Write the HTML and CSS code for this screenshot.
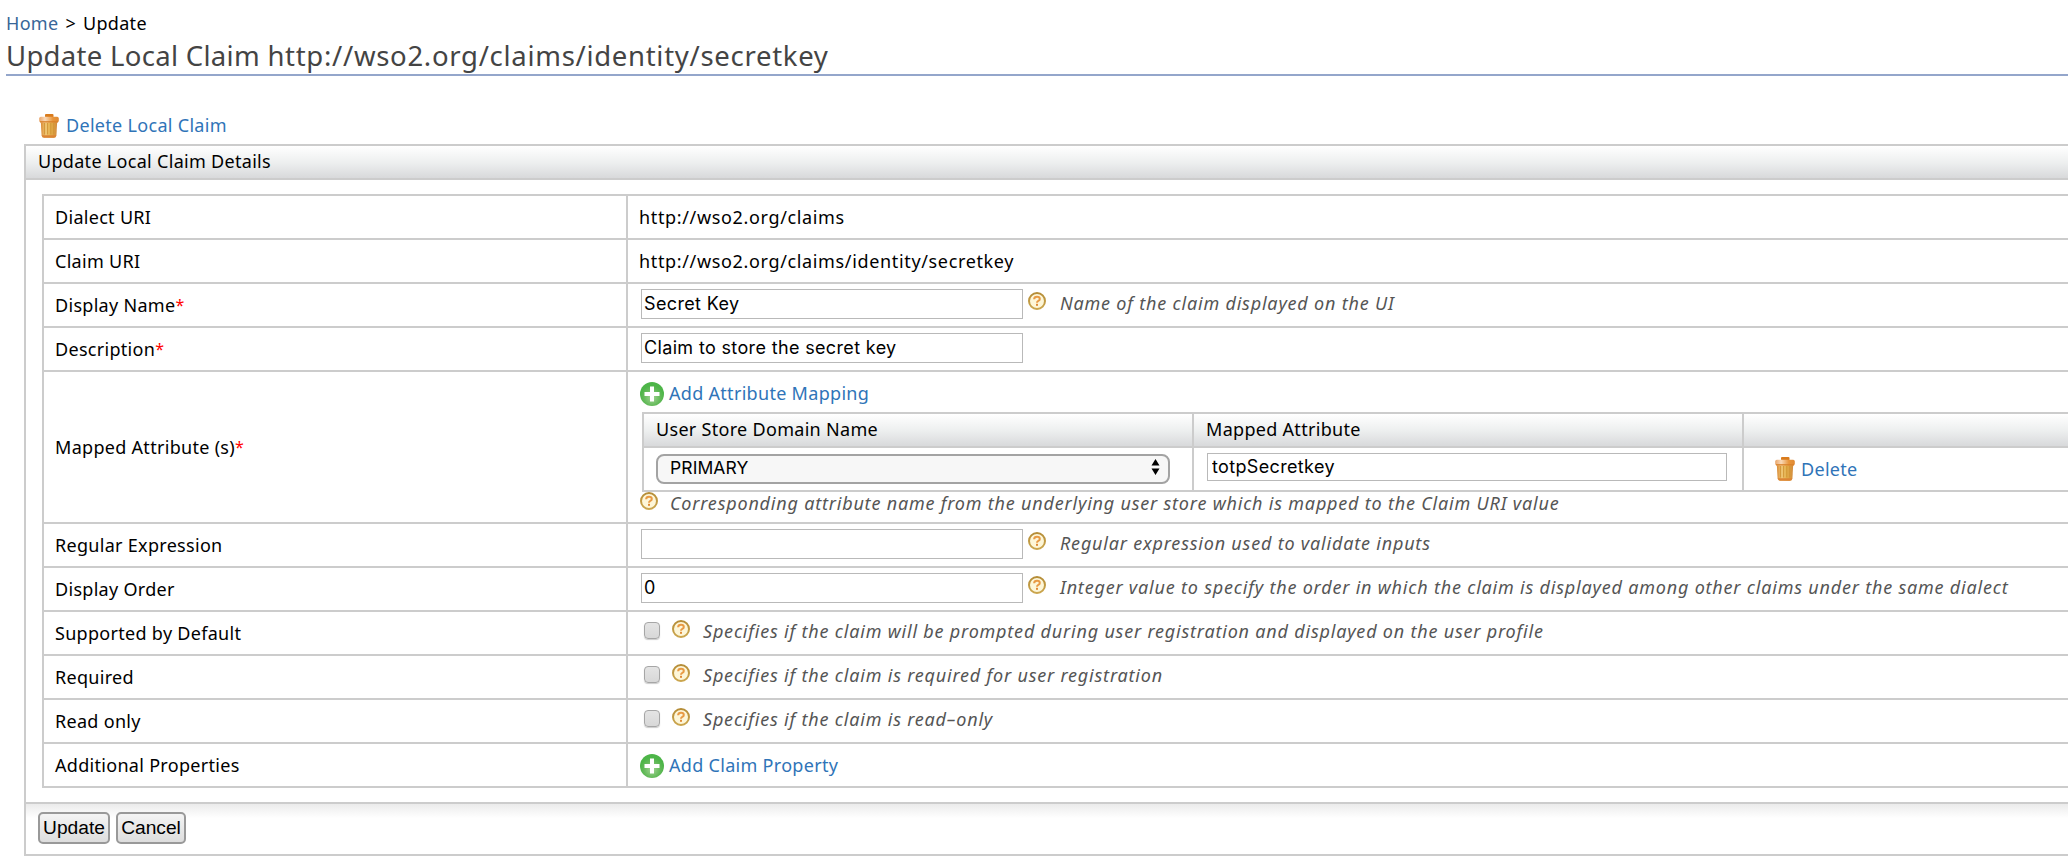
FILE: index.html
```html
<!DOCTYPE html>
<html lang="en">
<head>
<meta charset="utf-8">
<title>Update Local Claim</title>
<link rel="stylesheet" href="styles.css">
</head>
<body>
<svg class="defs" width="0" height="0">
  <defs>
    <linearGradient id="can" x1="0" x2="1" y1="0" y2="0">
      <stop offset="0" stop-color="#d98a35"/><stop offset=".3" stop-color="#f0c878"/><stop offset=".6" stop-color="#e4b04a"/><stop offset="1" stop-color="#d28a3c"/>
    </linearGradient>
    <linearGradient id="lid" x1="0" x2="1" y1="0" y2="0">
      <stop offset="0" stop-color="#e9a56a"/><stop offset=".3" stop-color="#f9d9b8"/><stop offset=".7" stop-color="#e8953a"/><stop offset="1" stop-color="#e08a34"/>
    </linearGradient>
    <radialGradient id="leaf" cx=".5" cy=".65" r=".5">
      <stop offset="0" stop-color="#a2d494"/><stop offset=".7" stop-color="#62b958"/><stop offset="1" stop-color="#4db548"/>
    </radialGradient>
    <linearGradient id="ring" x1="0" x2="0" y1="0" y2="1">
      <stop offset="0" stop-color="#b58d38"/><stop offset="1" stop-color="#cba64e"/>
    </linearGradient>
  </defs>
  <symbol id="trash" viewBox="0 0 20 24">
    <rect x="6" y="0" width="8.5" height="3.6" rx="1" fill="#d97b1c"/>
    <path d="M1.8 8h16.4l-.8 13.6q-.3 2.2-2.6 2.2H5.2q-2.3 0-2.6-2.2z" fill="url(#can)"/>
    <path d="M5.6 9v11.5M8.6 9v11.5M11.8 9v11.5M14.8 9v11.5" stroke="#cf9232" stroke-width=".9" fill="none"/>
    <path d="M2.8 21.2h14.4q-.4 2.6-2.6 2.6H5.4q-2.2 0-2.6-2.6z" fill="#dc8434"/>
    <rect x=".2" y="2.8" width="19.6" height="5.6" rx="1.6" fill="url(#lid)"/>
    <path d="M1 7.8h18" stroke="#d9822b" stroke-width="1.3"/>
  </symbol>
  <symbol id="plus" viewBox="0 0 24 24">
    <circle cx="12" cy="12" r="12" fill="url(#leaf)"/>
    <path d="M12 4.5v15M4.5 12h15" stroke="#fff" stroke-width="4"/>
  </symbol>
  <symbol id="help" viewBox="0 0 18 18">
    <circle cx="9" cy="9" r="8" fill="#fdf6d8" stroke="url(#ring)" stroke-width="2"/>
    <path d="M6.1 7.2Q6.2 4.7 9 4.7q2.8 0 2.8 2.2 0 1.3-1.5 2Q9 9.5 9 10.8" fill="none" stroke="#e89a45" stroke-width="2"/>
    <rect x="8" y="11.8" width="2" height="2" fill="#e08a35"/>
  </symbol>
</svg>

<div class="crumbs"><a class="home">Home</a> <span class="sep">&gt;</span> <span>Update</span></div>
<h1 class="title">Update Local Claim <span class="uri">http://wso2.org/claims/identity/secretkey</span></h1>

<main class="work">
  <a class="action remove"><svg class="trash"><use href="#trash"/></svg><span>Delete Local Claim</span></a>
  <section class="panel">
    <h2 class="bar">Update Local Claim Details</h2>
    <div class="form">
      <div class="row"><div class="label">Dialect URI</div><div class="value plain">http://wso2.org/claims</div></div>
      <div class="row"><div class="label">Claim URI</div><div class="value plain">http://wso2.org/claims/identity/secretkey</div></div>
      <div class="row"><div class="label">Display Name<span class="req">*</span></div><div class="value"><input class="field" type="text" value="Secret Key"><svg class="help"><use href="#help"/></svg><i class="hint">Name of the claim displayed on the UI</i></div></div>
      <div class="row"><div class="label">Description<span class="req">*</span></div><div class="value"><input class="field" type="text" value="Claim to store the secret key"></div></div>
      <div class="row tall"><div class="label">Mapped Attribute (s)<span class="req">*</span></div>
        <div class="value stack">
          <a class="action add"><svg class="plus"><use href="#plus"/></svg><span>Add Attribute Mapping</span></a>
          <div class="map">
            <div class="th">User Store Domain Name</div><div class="th">Mapped Attribute</div><div class="th"></div>
            <div class="td"><div class="select"><span>PRIMARY</span><svg class="arrows" viewBox="0 0 9 16"><path d="M4.5 0L8.5 6.4H.5zM4.5 16L.5 9.6h8z"/></svg></div></div>
            <div class="td"><input class="field wide" type="text" value="totpSecretkey"></div>
            <div class="td"><a class="action del"><svg class="trash"><use href="#trash"/></svg><span>Delete</span></a></div>
          </div>
          <div class="note"><svg class="help"><use href="#help"/></svg><i class="hint">Corresponding attribute name from the underlying user store which is mapped to the Claim URI value</i></div>
        </div>
      </div>
      <div class="row"><div class="label">Regular Expression</div><div class="value"><input class="field" type="text"><svg class="help"><use href="#help"/></svg><i class="hint">Regular expression used to validate inputs</i></div></div>
      <div class="row"><div class="label">Display Order</div><div class="value"><input class="field" type="text" value="0"><svg class="help"><use href="#help"/></svg><i class="hint">Integer value to specify the order in which the claim is displayed among other claims under the same dialect</i></div></div>
      <div class="row"><div class="label">Supported by Default</div><div class="value"><input class="check" type="checkbox"><svg class="help"><use href="#help"/></svg><i class="hint">Specifies if the claim will be prompted during user registration and displayed on the user profile</i></div></div>
      <div class="row"><div class="label">Required</div><div class="value"><input class="check" type="checkbox"><svg class="help"><use href="#help"/></svg><i class="hint">Specifies if the claim is required for user registration</i></div></div>
      <div class="row"><div class="label">Read only</div><div class="value"><input class="check" type="checkbox"><svg class="help"><use href="#help"/></svg><i class="hint">Specifies if the claim is read–only</i></div></div>
      <div class="row"><div class="label">Additional Properties</div><div class="value stack"><a class="action add"><svg class="plus"><use href="#plus"/></svg><span>Add Claim Property</span></a></div></div>
    </div>
    <div class="foot"><button class="btn update">Update</button><button class="btn cancel">Cancel</button></div>
  </section>
</main>
</body>
</html>
```
FILE: styles.css
```css
* { box-sizing: border-box; }
body { margin: 0; height: 864px; overflow: hidden; background: #fff; color: #000; font: 18px "Noto Sans", sans-serif; letter-spacing: .3px; white-space: nowrap; }
.defs { display: block; height: 0; }
svg { display: block; flex: none; }
h1, h2 { margin: 0; font-weight: 400; }

.crumbs { height: 38px; padding-left: 6px; line-height: 46px; }
.home { color: #386698; }
.sep { margin: 0 2px; }
.title { height: 38px; margin-left: 6px; border-bottom: 2px solid #94a6cb; font-size: 27.5px; line-height: 36px; color: #444; letter-spacing: .3px; }
.uri { letter-spacing: .7px; }

.work { margin-left: 24px; width: 2100px; }
.action { display: flex; align-items: center; color: #2f74b8; }
.trash { width: 20px; height: 24px; }
.plus { width: 24px; height: 24px; }
.help { width: 18px; height: 18px; margin-top: 8px; }
.remove { height: 68px; padding: 32px 0 0 15px; line-height: 20px; gap: 7px; }
.remove span { margin-top: -2px; }

.panel { border: 2px solid #ccc; height: 712px; }
.bar { height: 34px; padding-left: 12px; border-bottom: 2px solid #ccc; font-size: 18px; line-height: 30px; background: linear-gradient(#fff, #eceeee 55%, #d8d9db); }
.form { margin: 14px 0 14px 16px; border: 2px solid #ccc; border-bottom: 0; }
.row { display: grid; grid-template-columns: 582px 2px 1fr; height: 44px; border-bottom: 2px solid #ccc; }
.row.tall { height: 152px; }
.label { display: flex; align-items: center; padding-left: 11px; }
.req { color: #f00; font-size: 16px; }
.value { grid-column: 2 / 4; display: flex; align-items: flex-start; padding-left: 13px; border-left: 2px solid #ccc; }
.value.plain { padding-left: 11px; align-items: center; letter-spacing: .65px; }
.value.stack { display: block; padding-left: 12px; }

.field { width: 382px; height: 30px; margin: 5px 5px 0 0; padding: 0 2px 1px; border: 1px solid #b9b9b9; background: #fff; font: 18px Inter, sans-serif; letter-spacing: .35px; }
.hint { line-height: 38px; margin-left: 14px; color: #555; letter-spacing: .8px; }
.check { appearance: none; width: 16px; height: 17px; margin: 10px 12px 0 3px; border: 1.5px solid #a6a6a6; border-radius: 4px; background: linear-gradient(#e4e4e4, #d8d8d8); box-shadow: 0 1px 1px #ccc; }
.check + .help + .hint { margin-left: 13px; }

.add { height: 40px; line-height: 42px; gap: 5px; padding-top: 4px; }
.add span { margin-top: -2px; }
.map { display: grid; grid-template-columns: 548px 550px 1fr; margin-left: 2px; height: 80px; border: 2px solid #ccc; border-right: 0; }
.th { height: 34px; padding-left: 12px; border-bottom: 2px solid #ccc; line-height: 30px; background: linear-gradient(#fff, #eceeee 55%, #d8d9db); }
.th + .th { border-left: 2px solid #ccc; }
.td { height: 42px; padding-left: 12px; }
.td + .td { border-left: 2px solid #ccc; padding-left: 13px; }
.select { display: flex; justify-content: space-between; width: 514px; height: 30px; margin-top: 6px; padding: 0 8px 0 12px; border: 2px solid #a3a3a3; border-radius: 8px; background: #f7f7f7; font: 17.5px/24px Inter, sans-serif; letter-spacing: .1px; }
.arrows { width: 9px; height: 16px; margin-top: 3px; }
.wide { display: block; width: 520px; height: 28px; padding-left: 4px; }
.del { height: 42px; padding-left: 18px; gap: 6px; }
.note { display: flex; align-items: flex-start; }
.note .help { margin-top: 0; }
.note .hint { line-height: 22px; margin-left: 12px; }

.foot { display: flex; gap: 6px; height: 52px; padding: 8px 0 0 12px; border-top: 2px solid #ccc; background: linear-gradient(#ebebeb, #fff 14px); }
.btn { height: 32px; padding: 0 0 1px; border: 2px solid #999; border-radius: 5px; background: linear-gradient(#f4f4f4, #ddd); font: 19.2px "Liberation Sans", sans-serif; letter-spacing: 0; }
.update { width: 72px; }
.cancel { width: 70px; }
```
